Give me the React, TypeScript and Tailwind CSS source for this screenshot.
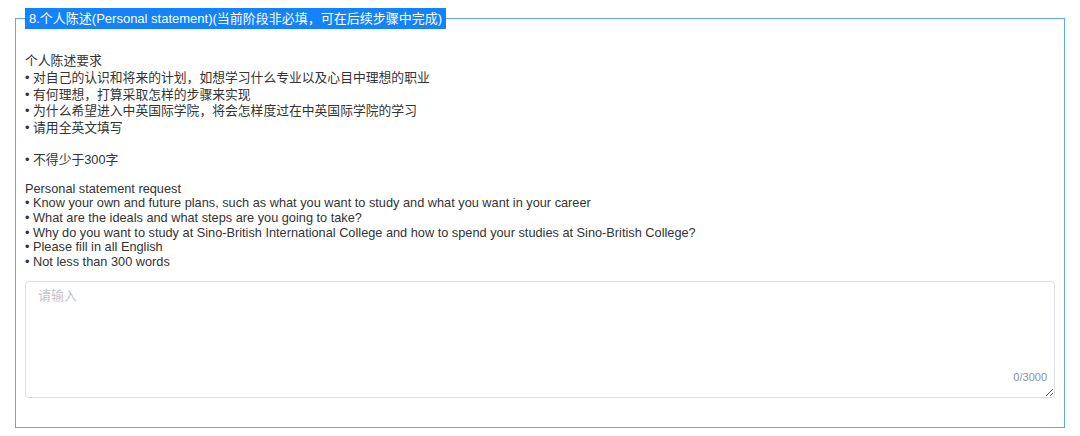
import { useState } from "react";

const zhLines = [
  "个人陈述要求",
  "• 对自己的认识和将来的计划，如想学习什么专业以及心目中理想的职业",
  "• 有何理想，打算采取怎样的步骤来实现",
  "• 为什么希望进入中英国际学院，将会怎样度过在中英国际学院的学习",
  "• 请用全英文填写",
  "",
  "• 不得少于300字",
];

const enLines = [
  "Personal statement request",
  "• Know your own and future plans, such as what you want to study and what you want in your career",
  "• What are the ideals and what steps are you going to take?",
  "• Why do you want to study at Sino-British International College and how to spend your studies at Sino-British College?",
  "• Please fill in all English",
  "• Not less than 300 words",
];

export default function App() {
  const [value, setValue] = useState("");

  return (
    <div className="h-[436px] w-[1080px] bg-white pt-2 font-['Liberation_Sans','Noto_Sans_CJK_SC',sans-serif] text-[13px] text-[#333]">
      <fieldset className="mx-[15px] border border-[#5ea6f7] px-[9px] pb-[29px]">
        <legend className="bg-[#1482fa] px-[4px] leading-[21px] text-white">
          8.个人陈述(Personal statement)(当前阶段非必填，可在后续步骤中完成)
        </legend>

        <div className="mt-[24px] text-[12.8px] leading-[16.8px]">
          {zhLines.map((line, i) => (
            <p key={i} className={line ? "h-[16.8px] whitespace-pre" : "h-[15px]"}>
              {line}
            </p>
          ))}
        </div>

        <div className="mt-[13px] text-[12.75px] leading-[14.6px]">
          {enLines.map((line, i) => (
            <p key={i} className="h-[14.6px] whitespace-pre">
              {line}
            </p>
          ))}
        </div>

        <div className="relative mt-[12px]">
          <textarea
            value={value}
            maxLength={3000}
            onChange={(event) => setValue(event.target.value)}
            placeholder="请输入"
            className="block h-[117px] w-full resize-y rounded-[4px] border border-[#dcdfe6] px-[12px] py-[4px] text-[13px] leading-[19px] text-[#606266] outline-none placeholder:text-[#c0c4cc] focus:border-[#409eff]"
          />
          <span className="absolute bottom-[14px] right-[8px] bg-white text-[11px] leading-[14px] text-[#909399]">
            {value.length}/3000
          </span>
        </div>
      </fieldset>
    </div>
  );
}
